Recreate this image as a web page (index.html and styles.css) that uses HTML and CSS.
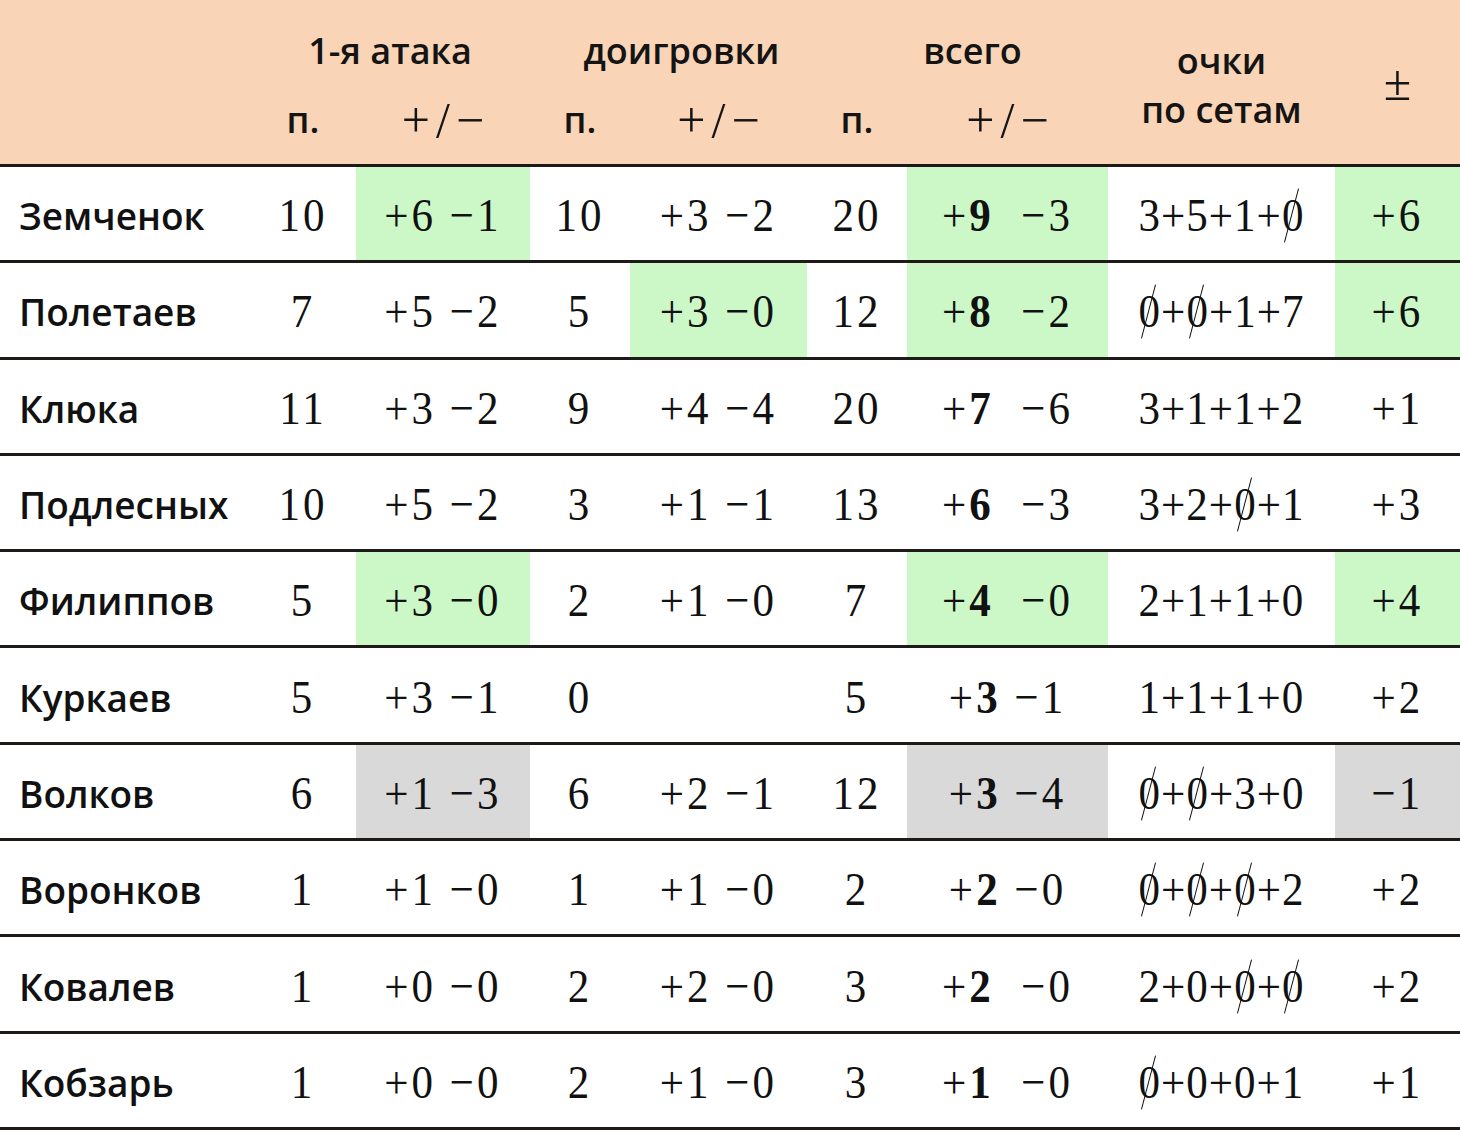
FILE: index.html
```html
<!DOCTYPE html>
<html lang="ru">
<head>
<meta charset="utf-8">
<title>Статистика</title>
<link rel="stylesheet" href="styles.css">
</head>
<body>
<table class="stats">
  <colgroup>
    <col class="c-name"><col class="c-n1"><col class="c-pm1"><col class="c-n2"><col class="c-pm2"><col class="c-n3"><col class="c-pm3"><col class="c-sets"><col class="c-tot">
  </colgroup>
  <thead>
    <tr class="h1">
      <th></th>
      <th colspan="2" class="grp g1">1-я атака</th>
      <th colspan="2" class="grp g2">доигровки</th>
      <th colspan="2" class="grp g3">всего</th>
      <th rowspan="2" class="sets-h">очки<br>по сетам</th>
      <th rowspan="2" class="pm-h"><span class="pm-sym">±</span></th>
    </tr>
    <tr class="h2">
      <th></th>
      <th class="lbl">п.</th><th class="sym">+/−</th>
      <th class="lbl">п.</th><th class="sym">+/−</th>
      <th class="lbl">п.</th><th class="sym">+/−</th>
    </tr>
  </thead>
  <tbody>
    <tr>
      <td class="name">Земченок</td>
      <td><span class="v">10</span></td><td class="good"><span class="v">+6 −1</span></td>
      <td><span class="v">10</span></td><td><span class="v">+3 −2</span></td>
      <td><span class="v">20</span></td><td class="good"><span class="v">+<b>9</b>&nbsp; −3</span></td>
      <td class="sets"><span class="v">3+5+1+<i class="e">0</i></span></td><td class="good"><span class="v">+6</span></td>
    </tr>
    <tr>
      <td class="name">Полетаев</td>
      <td><span class="v">7</span></td><td><span class="v">+5 −2</span></td>
      <td><span class="v">5</span></td><td class="good"><span class="v">+3 −0</span></td>
      <td><span class="v">12</span></td><td class="good"><span class="v">+<b>8</b>&nbsp; −2</span></td>
      <td class="sets"><span class="v"><i class="e">0</i>+<i class="e">0</i>+1+7</span></td><td class="good"><span class="v">+6</span></td>
    </tr>
    <tr>
      <td class="name">Клюка</td>
      <td><span class="v">11</span></td><td><span class="v">+3 −2</span></td>
      <td><span class="v">9</span></td><td><span class="v">+4 −4</span></td>
      <td><span class="v">20</span></td><td><span class="v">+<b>7</b>&nbsp; −6</span></td>
      <td class="sets"><span class="v">3+1+1+2</span></td><td><span class="v">+1</span></td>
    </tr>
    <tr>
      <td class="name">Подлесных</td>
      <td><span class="v">10</span></td><td><span class="v">+5 −2</span></td>
      <td><span class="v">3</span></td><td><span class="v">+1 −1</span></td>
      <td><span class="v">13</span></td><td><span class="v">+<b>6</b>&nbsp; −3</span></td>
      <td class="sets"><span class="v">3+2+<i class="e">0</i>+1</span></td><td><span class="v">+3</span></td>
    </tr>
    <tr>
      <td class="name">Филиппов</td>
      <td><span class="v">5</span></td><td class="good"><span class="v">+3 −0</span></td>
      <td><span class="v">2</span></td><td><span class="v">+1 −0</span></td>
      <td><span class="v">7</span></td><td class="good"><span class="v">+<b>4</b>&nbsp; −0</span></td>
      <td class="sets"><span class="v">2+1+1+0</span></td><td class="good"><span class="v">+4</span></td>
    </tr>
    <tr>
      <td class="name">Куркаев</td>
      <td><span class="v">5</span></td><td><span class="v">+3 −1</span></td>
      <td><span class="v">0</span></td><td></td>
      <td><span class="v">5</span></td><td><span class="v">+<b>3</b> −1</span></td>
      <td class="sets"><span class="v">1+1+1+0</span></td><td><span class="v">+2</span></td>
    </tr>
    <tr>
      <td class="name">Волков</td>
      <td><span class="v">6</span></td><td class="bad"><span class="v">+1 −3</span></td>
      <td><span class="v">6</span></td><td><span class="v">+2 −1</span></td>
      <td><span class="v">12</span></td><td class="bad"><span class="v">+<b>3</b> −4</span></td>
      <td class="sets"><span class="v"><i class="e">0</i>+<i class="e">0</i>+3+0</span></td><td class="bad"><span class="v">−1</span></td>
    </tr>
    <tr>
      <td class="name">Воронков</td>
      <td><span class="v">1</span></td><td><span class="v">+1 −0</span></td>
      <td><span class="v">1</span></td><td><span class="v">+1 −0</span></td>
      <td><span class="v">2</span></td><td><span class="v">+<b>2</b> −0</span></td>
      <td class="sets"><span class="v"><i class="e">0</i>+<i class="e">0</i>+<i class="e">0</i>+2</span></td><td><span class="v">+2</span></td>
    </tr>
    <tr>
      <td class="name">Ковалев</td>
      <td><span class="v">1</span></td><td><span class="v">+0 −0</span></td>
      <td><span class="v">2</span></td><td><span class="v">+2 −0</span></td>
      <td><span class="v">3</span></td><td><span class="v">+<b>2</b>&nbsp; −0</span></td>
      <td class="sets"><span class="v">2+0+<i class="e">0</i>+<i class="e">0</i></span></td><td><span class="v">+2</span></td>
    </tr>
    <tr>
      <td class="name">Кобзарь</td>
      <td><span class="v">1</span></td><td><span class="v">+0 −0</span></td>
      <td><span class="v">2</span></td><td><span class="v">+1 −0</span></td>
      <td><span class="v">3</span></td><td><span class="v">+<b>1</b>&nbsp; −0</span></td>
      <td class="sets"><span class="v"><i class="e">0</i>+0+0+1</span></td><td><span class="v">+1</span></td>
    </tr>
  </tbody>
</table>
</body>
</html>
```
FILE: styles.css
```css
html, body {
  margin: 0;
  padding: 0;
  background: #ffffff;
}

.stats {
  width: 1460px;
  border-collapse: collapse;
  table-layout: fixed;
  color: #111;
}

.c-name { width: 250px; }
.c-n1 { width: 106px; }
.c-pm1 { width: 174px; }
.c-n2 { width: 100px; }
.c-pm2 { width: 177px; }
.c-n3 { width: 100px; }
.c-pm3 { width: 201px; }
.c-sets { width: 227px; }
.c-tot { width: 125px; }

thead {
  background: #f9d4b6;
}

thead th {
  font-family: "Open Sans", "Liberation Sans", sans-serif;
  font-weight: 600;
  font-size: 36px;
  color: #141414;
  padding: 0;
  text-align: center;
  line-height: 1.2;
}

.h1 th {
  height: 70px;
  vertical-align: middle;
  padding-top: 16px;
}

.h2 th {
  height: 68px;
  padding-bottom: 10px;
  border-bottom: 3px solid #1e1a18;
  vertical-align: middle;
}

.grp.g2 { padding-left: 26px; }
.grp.g3 { padding-left: 30px; }

.h1 th.sets-h {
  line-height: 49px;
  height: auto;
  padding-top: 5px;
  padding-bottom: 0;
  border-bottom: 3px solid #1e1a18;
  vertical-align: middle;
}

.h1 th.pm-h {
  height: auto;
  padding-top: 2px;
  padding-bottom: 0;
  border-bottom: 3px solid #1e1a18;
}

.pm-sym {
  font-family: "Liberation Serif", serif;
  font-weight: 400;
  font-size: 50px;
}

th.sym {
  font-family: "Liberation Serif", serif;
  font-weight: 400;
  font-size: 50px;
  letter-spacing: 6px;
  text-indent: 6px;
}

tbody td {
  height: 89.3px;
  padding: 4px 0 0;
  border-bottom: 3px solid #1e1a18;
  text-align: center;
  vertical-align: middle;
  font-family: "Liberation Serif", serif;
  font-size: 43px;
  color: #111;
}

tbody td.name {
  text-align: left;
  padding-left: 19px;
  font-family: "Open Sans", "Liberation Sans", sans-serif;
  font-weight: 600;
  font-size: 37px;
}

.v {
  display: inline-block;
  transform: scaleY(1.1);
  white-space: pre;
  letter-spacing: 3px;
}

td.sets .v {
  letter-spacing: 1px;
}

.v b {
  font-weight: 700;
}

.e {
  font-style: normal;
  position: relative;
  display: inline-block;
}

.e::after {
  content: "";
  position: absolute;
  left: 42%;
  top: -2%;
  height: 104%;
  border-left: 1.5px solid #111;
  transform: rotate(16deg);
}

td.good {
  background: #ccf8c8;
}

td.bad {
  background: #d9d9d9;
}
```
